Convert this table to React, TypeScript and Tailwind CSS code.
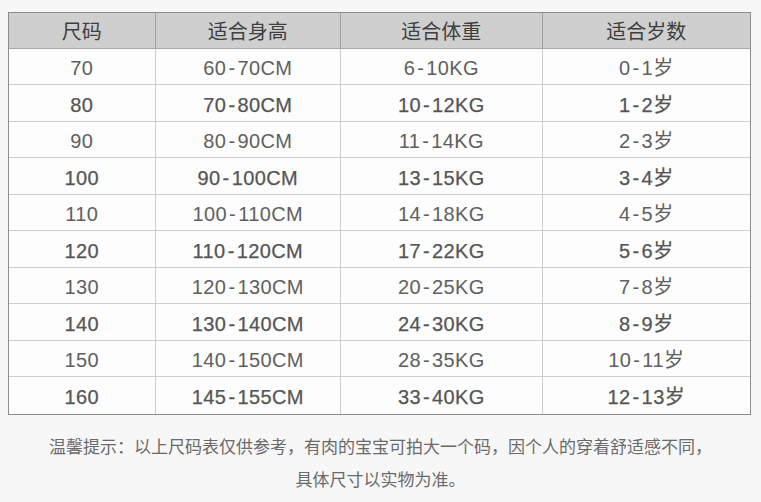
import React from "react";

const rows: [string, string, string, string][] = [
  ["70", "60-70CM", "6-10KG", "0-1岁"],
  ["80", "70-80CM", "10-12KG", "1-2岁"],
  ["90", "80-90CM", "11-14KG", "2-3岁"],
  ["100", "90-100CM", "13-15KG", "3-4岁"],
  ["110", "100-110CM", "14-18KG", "4-5岁"],
  ["120", "110-120CM", "17-22KG", "5-6岁"],
  ["130", "120-130CM", "20-25KG", "7-8岁"],
  ["140", "130-140CM", "24-30KG", "8-9岁"],
  ["150", "140-150CM", "28-35KG", "10-11岁"],
  ["160", "145-155CM", "33-40KG", "12-13岁"],
];

const headers = ["尺码", "适合身高", "适合体重", "适合岁数"];
const widths = ["w-[147px]", "w-[186px]", "w-[202px]", "w-[208px]"];

function Cell({ text }: { text: string }) {
  const parts = text.split("-");
  if (parts.length === 1) return <>{text}</>;
  return (
    <>
      {parts[0]}
      <span className="mx-[2px]">-</span>
      {parts[1]}
    </>
  );
}

export default function App() {
  return (
    <div
      className="w-[761px] h-[502px] bg-[#f7f7f7] pt-[12px] pl-[8px]"
      style={{ fontFamily: '"Liberation Sans", "Noto Sans CJK SC", sans-serif' }}
    >
      <div className="w-[743px] border border-[#8c8c8c] bg-[#fdfdfd]">
        <div className="flex h-[36px] bg-[#cfcfcf] border-b border-[#a8a8a8]">
          {headers.map((h, i) => (
            <div
              key={h}
              className={`${widths[i]} ${i < 3 ? "border-r border-[#a0a0a0]" : ""} flex items-center justify-center text-[20px] text-[#3f3f3f]`}
              style={{ fontFamily: '"Noto Sans CJK SC", sans-serif' }}
            >
              {h}
            </div>
          ))}
        </div>
        {rows.map((r, ri) => (
          <div
            key={ri}
            className={`flex ${ri % 2 === 0 ? "h-[36px]" : "h-[37px]"} ${ri < rows.length - 1 ? "border-b border-[#cdcdcd]" : ""}`}
          >
            {r.map((c, ci) => (
              <div
                key={ci}
                className={`${widths[ci]} ${ci < 3 ? "border-r border-[#cdcdcd]" : ""} flex items-center justify-center pt-[3px] text-[20px] tracking-[0.4px] ${
                  ri % 2 === 1 ? "text-[#555555] [-webkit-text-stroke:0.25px_#555555]" : "text-[#606060]"
                }`}
              >
                <Cell text={c} />
              </div>
            ))}
          </div>
        ))}
      </div>
      <div
        className="mt-[14px] pr-[8px] text-center text-[17px] leading-[33px] text-[#6a6a6a]"
        style={{ fontFamily: '"Noto Sans CJK SC", sans-serif' }}
      >
        <div>温馨提示：以上尺码表仅供参考，有肉的宝宝可拍大一个码，因个人的穿着舒适感不同，</div>
        <div>具体尺寸以实物为准。</div>
      </div>
    </div>
  );
}
